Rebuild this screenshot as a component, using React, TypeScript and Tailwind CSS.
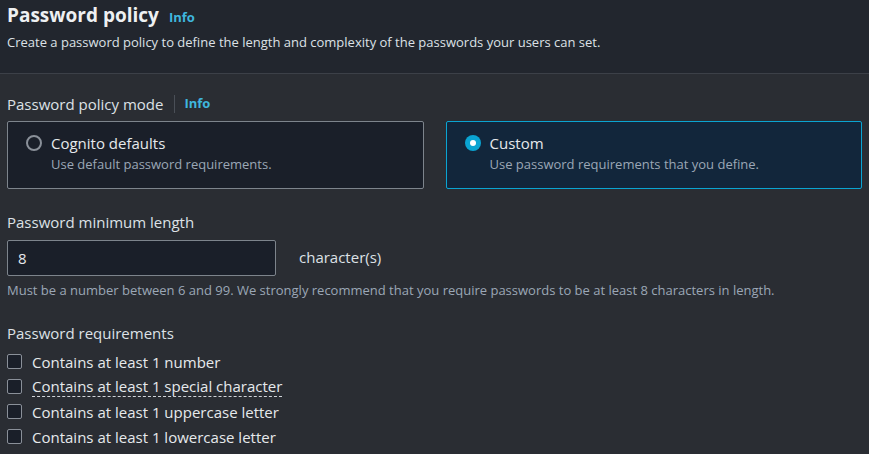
import React from 'react';

const requirements = [
  { label: 'Contains at least 1 number', dotted: false },
  { label: 'Contains at least 1 special character', dotted: true },
  { label: 'Contains at least 1 uppercase letter', dotted: false },
  { label: 'Contains at least 1 lowercase letter', dotted: false },
];

const ModeCard = ({
  title,
  description,
  selected,
}: {
  title: string;
  description: string;
  selected: boolean;
}) => (
  <div
    className={
      selected
        ? 'flex-1 h-[68px] rounded-[2px] border border-[#0aa4d2] bg-[#12263b] pl-[18px] pt-[10px] flex gap-[9px]'
        : 'flex-1 h-[68px] rounded-[2px] border border-[#7d848c] bg-[#1a1f29] pl-[18px] pt-[10px] flex gap-[9px]'
    }
  >
    <div className="pt-[3px]">
      {selected ? (
        <div className="w-[16px] h-[16px] rounded-full bg-[#0aa4d2] flex items-center justify-center">
          <div className="w-[6px] h-[6px] rounded-full bg-white" />
        </div>
      ) : (
        <div className="w-[16px] h-[16px] rounded-full border-2 border-[#8a9099]" />
      )}
    </div>
    <div className="flex flex-col">
      <span className="text-[15px] leading-[22px] text-[#e6e9ec]">{title}</span>
      <span className="text-[13px] leading-[20px] text-[#9ba7b6]">{description}</span>
    </div>
  </div>
);

export default function App() {
  return (
    <div className="w-[869px] h-[454px] bg-[#2a2d33] font-['Open_Sans',sans-serif] overflow-hidden">
      <div className="bg-[#22262e] border-b border-[#3c4048] h-[74px] px-[7px] pt-[2px]">
        <div className="flex items-baseline gap-[10px]">
          <h2 className="text-[19px] leading-[26px] font-bold text-[#eef0f2]">Password policy</h2>
          <span className="text-[13px] font-bold text-[#3fb6de]">Info</span>
        </div>
        <p className="text-[13px] leading-[20px] text-[#dde1e6] mt-[4px]">
          Create a password policy to define the length and complexity of the passwords your users can set.
        </p>
      </div>

      <div className="px-[7px] pt-[18px]">
        <div className="flex items-center h-[24px]">
          <span className="text-[15px] text-[#dde1e6]">Password policy mode</span>
          <span className="ml-[11px] mr-[9px] h-[18px] border-l border-[#4a4f57]" />
          <span className="text-[13px] font-bold text-[#3fb6de]">Info</span>
        </div>
        <div className="flex gap-[22px] mt-[5px]">
          <ModeCard title="Cognito defaults" description="Use default password requirements." selected={false} />
          <ModeCard title="Custom" description="Use password requirements that you define." selected />
        </div>

        <div className="mt-[21px] text-[15px] leading-[24px] text-[#dde1e6]">Password minimum length</div>
        <div className="flex items-center mt-[6px]">
          <div className="w-[269px] h-[36px] rounded-[2px] border border-[#7d848c] bg-[#1a1f29] flex items-center px-[10px] text-[15px] text-[#e6e9ec]">
            8
          </div>
          <span className="ml-[23px] mb-[2px] text-[15px] text-[#dde1e6]">character(s)</span>
        </div>
        <p className="mt-[5px] text-[13px] leading-[18px] text-[#9ba7b6]">
          Must be a number between 6 and 99. We strongly recommend that you require passwords to be at least 8 characters in length.
        </p>

        <div className="mt-[22px] text-[15px] leading-[24px] text-[#dde1e6]">Password requirements</div>
        <div className="flex flex-col mt-[4px]">
          {requirements.map((r) => (
            <div key={r.label} className="flex items-center gap-[10px] h-[25px]">
              <div className="w-[15px] h-[15px] rounded-[2px] border border-[#8a9099] bg-[#1a1f29]" />
              <span
                className={
                  r.dotted
                    ? 'text-[15px] leading-[20px] text-[#e6e9ec] border-b border-dashed border-[#d0d4d9]'
                    : 'text-[15px] leading-[20px] text-[#e6e9ec]'
                }
              >
                {r.label}
              </span>
            </div>
          ))}
        </div>
      </div>
    </div>
  );
}
